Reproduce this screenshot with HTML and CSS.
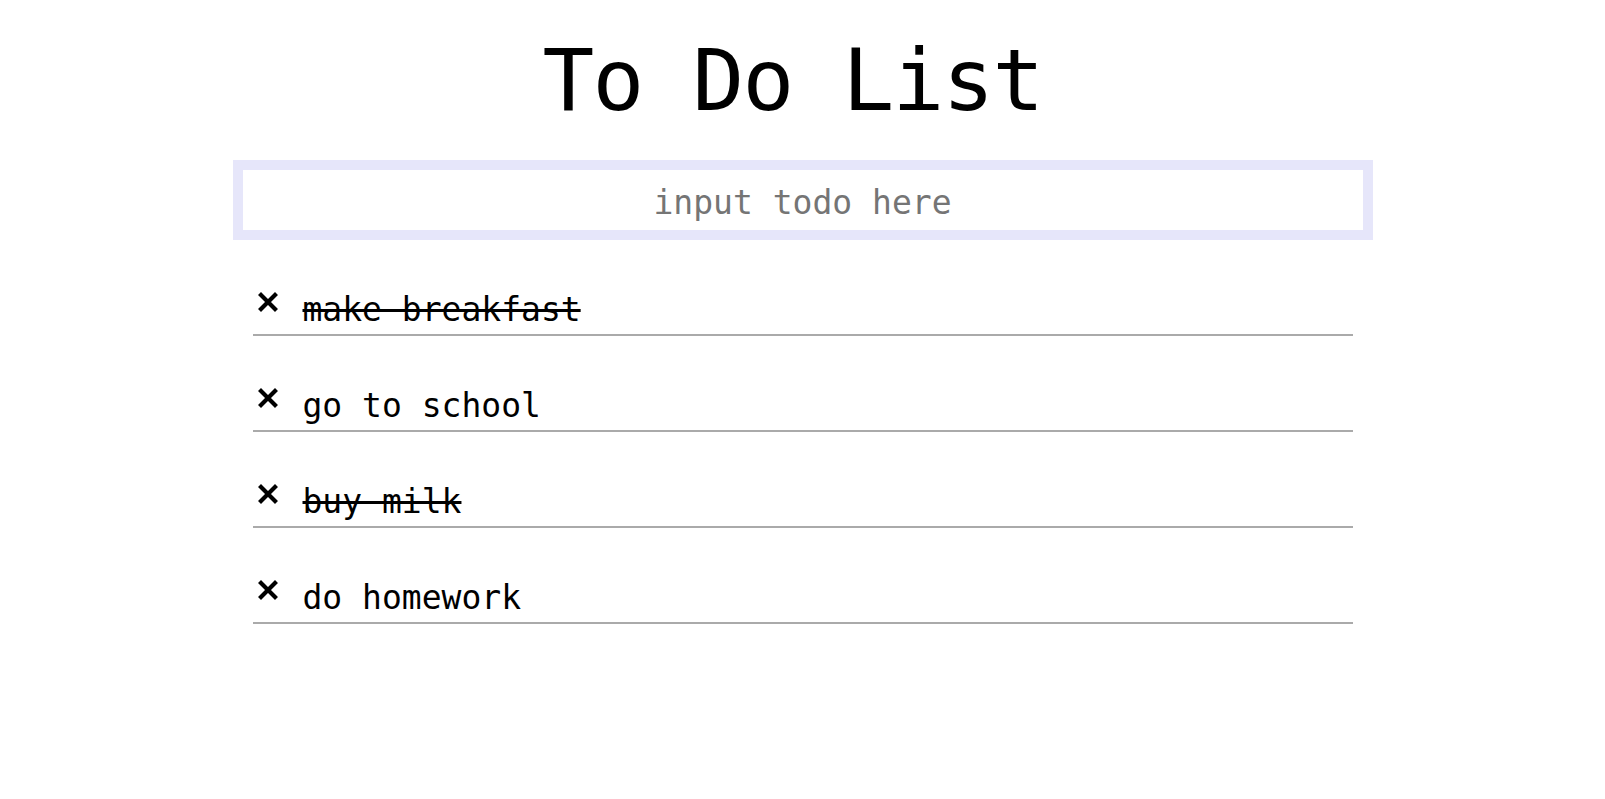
FILE: index.html
```html
<!DOCTYPE html>
<html lang="en">
<head>
<meta charset="utf-8">
<title>To Do List</title>
<link rel="stylesheet" href="styles.css">
</head>
<body>
<main class="app">
  <h1 class="title">To Do List</h1>
  <input class="todo-input" type="text" placeholder="input todo here">
  <ul class="todo-list">
    <li class="todo-item done">
      <span class="remove"><svg viewBox="0 0 20 20" width="20" height="20"><path d="M3 3 L17 17 M17 3 L3 17" stroke="#000" stroke-width="4.2" stroke-linecap="square"/></svg></span>
      <span class="todo-text">make breakfast</span>
    </li>
    <li class="todo-item">
      <span class="remove"><svg viewBox="0 0 20 20" width="20" height="20"><path d="M3 3 L17 17 M17 3 L3 17" stroke="#000" stroke-width="4.2" stroke-linecap="square"/></svg></span>
      <span class="todo-text">go to school</span>
    </li>
    <li class="todo-item done">
      <span class="remove"><svg viewBox="0 0 20 20" width="20" height="20"><path d="M3 3 L17 17 M17 3 L3 17" stroke="#000" stroke-width="4.2" stroke-linecap="square"/></svg></span>
      <span class="todo-text">buy milk</span>
    </li>
    <li class="todo-item">
      <span class="remove"><svg viewBox="0 0 20 20" width="20" height="20"><path d="M3 3 L17 17 M17 3 L3 17" stroke="#000" stroke-width="4.2" stroke-linecap="square"/></svg></span>
      <span class="todo-text">do homework</span>
    </li>
  </ul>
</main>
</body>
</html>
```

FILE: styles.css
```css
html, body {
  margin: 0;
  padding: 0;
  background: #fff;
}

body {
  font-family: "DejaVu Sans Mono", "Liberation Mono", monospace;
  color: #000;
}

.app {
  display: flex;
  flex-direction: column;
  align-items: center;
}

.title {
  margin: 30px 0 0;
  padding-right: 20px;
  font-size: 86px;
  line-height: 100px;
  font-weight: normal;
  letter-spacing: -1.8px;
  text-align: center;
}

.todo-input {
  box-sizing: border-box;
  margin-top: 30px;
  width: 1140px;
  height: 80px;
  border: 10px solid #e6e6fa;
  outline: none;
  background: #fff;
  padding: 4px 0 0;
  font-family: "DejaVu Sans Mono", "Liberation Mono", monospace;
  font-size: 33px;
  text-align: center;
  color: #000;
}

.todo-input::placeholder {
  color: #757575;
}

.todo-list {
  list-style: none;
  margin: 0;
  padding: 0;
  width: 1100px;
}

.todo-item {
  display: flex;
  align-items: flex-start;
  margin-top: 50px;
  padding-bottom: 4px;
  border-bottom: 2px solid #aaa;
  font-size: 33px;
  line-height: 40px;
}

.remove {
  display: flex;
  width: 20px;
  height: 20px;
  margin: 2px 0 0 5px;
}

.todo-text {
  margin-left: 25px;
}

.done .todo-text {
  text-decoration: line-through;
  text-decoration-thickness: 3px;
}
```
